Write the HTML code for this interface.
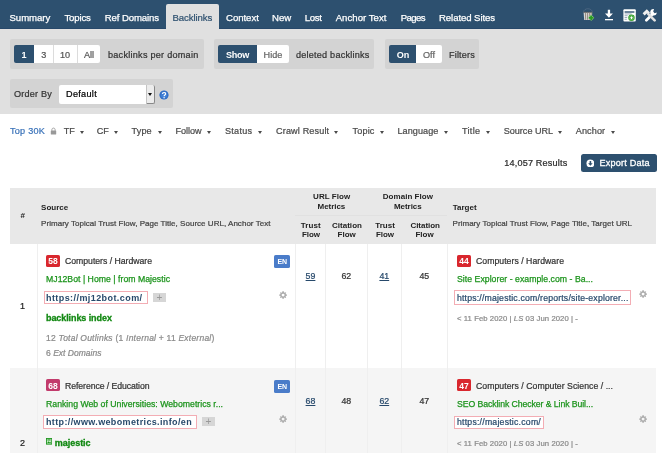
<!DOCTYPE html>
<html>
<head>
<meta charset="utf-8">
<title>Backlinks</title>
<style>
html,body{margin:0;padding:0;}
body{width:662px;height:453px;overflow:hidden;background:#fff;position:relative;font-family:"Liberation Sans",sans-serif;}
.a{position:absolute;}
.t{position:absolute;white-space:nowrap;line-height:14px;height:14px;font-family:"Liberation Sans",sans-serif;}
.t i{font-style:italic;}
.panel{position:absolute;background:#d3d3d3;border-radius:2px;}
.btn{position:absolute;background:#fff;}
.on{background:#2d506f;}
.vline{position:absolute;width:1px;background:#efefef;}
.badge{position:absolute;border-radius:1.6px;}
.ubox{position:absolute;border:1px solid #f3adb4;background:#fff;box-sizing:border-box;}
.plus{position:absolute;background:#d6d6d6;color:#999;font-size:10px;line-height:9px;text-align:center;}
.caret{position:absolute;width:0;height:0;border-left:2.9px solid transparent;border-right:2.9px solid transparent;border-top:3.1px solid #4a4a4a;margin-left:-0.4px;}
</style>
</head>
<body>
<div id="root" style="position:absolute;left:0;top:0;width:662px;height:453px;will-change:transform;">
<!-- top grey area -->
<div class="a" style="left:0;top:0;width:662px;height:114px;background:#e0e0e0;"></div>
<!-- nav -->
<div class="a" style="left:0;top:0;width:662px;height:29px;background:#2d506f;"></div>
<div class="a" style="left:0;top:28px;width:662px;height:1px;background:#27486a;"></div>
<div class="a" style="left:165.5px;top:4.2px;width:53.6px;height:24.8px;background:#e0e0e0;border-radius:2px 2px 0 0;"></div>

<!-- nav icons -->
<svg class="a" style="left:582px;top:7px" width="14" height="15" viewBox="0 0 14 15">
  <path d="M1.4 5.2 C2 0.6 9.8 0.6 10.4 5.2" fill="none" stroke="#5d7289" stroke-width="0.6"/>
  <path d="M1.6 5.2 L10.2 5.2 L9.8 13 L2.2 13 Z" fill="#d8d8d8"/>
  <rect x="1.4" y="4.8" width="9" height="0.8" fill="#4a4a4a"/>
  <path d="M3.4 5.6 L3.7 12.8 M5.4 5.6 L5.5 12.8 M7.4 5.6 L7.3 12.8 M9.2 5.6 L8.9 12.8" stroke="#8d8175" stroke-width="0.9" fill="none"/>
  <path d="M9.2 7.8 L12.2 10.8 L9.2 13.8 L6.2 10.8 Z" fill="#b9e6b0"/>
  <path d="M9.2 8.4 V13.2 M6.8 10.8 H11.6" stroke="#2a9a22" stroke-width="1.9"/>
</svg>
<svg class="a" style="left:604px;top:9px" width="10" height="12" viewBox="0 0 10 12">
  <path d="M3.8 0.7 H6.1 V4.6 H8.9 L4.95 8.7 L1 4.6 H3.8 Z" fill="#fff"/>
  <rect x="1" y="10" width="8" height="1.3" fill="#fff"/>
</svg>
<svg class="a" style="left:622.5px;top:8.5px" width="13" height="13" viewBox="0 0 13 13">
  <rect x="0.4" y="0.3" width="12.4" height="12.2" rx="1" fill="#fff"/>
  <rect x="1.6" y="2.3" width="9.8" height="1.4" fill="#2d506f"/>
  <rect x="1.6" y="4.5" width="7" height="0.9" fill="#8fa0b4"/>
  <rect x="1.6" y="6.3" width="3" height="0.9" fill="#8fa0b4"/>
  <rect x="1.6" y="8" width="2.6" height="0.9" fill="#8fa0b4"/>
  <rect x="1.6" y="9.8" width="2.2" height="0.9" fill="#8fa0b4"/>
  <circle cx="8.5" cy="8.8" r="3.2" fill="#2f9a26"/>
  <circle cx="8.5" cy="8.8" r="2.2" fill="none" stroke="#6fc267" stroke-width="0.8"/>
  <path d="M8.5 7.4 V10.2 M7.1 8.8 H9.9" stroke="#fff" stroke-width="1"/>
</svg>
<svg class="a" style="left:642px;top:8px" width="15" height="14" viewBox="0 0 15 14">
  <!-- wrench -->
  <path d="M4.4 12.2 L10.4 6.2" stroke="#fff" stroke-width="2.7" stroke-linecap="round"/>
  <path d="M12 1 A3.3 3.3 0 1 0 14.8 4.6 L12.6 5.2 L11.2 3.6 Z" fill="#fff"/>
  <!-- hammer -->
  <path d="M12.6 12.4 L6.4 6.2" stroke="#e2e2e2" stroke-width="2.6" stroke-linecap="round"/>
  <path d="M0.6 5.2 L4.8 1.2 L8 4.4 L6.2 6.2 L5.2 5.3 L2.6 7.6 Z" fill="#efefef"/>
</svg>

<!-- filter panels -->
<div class="panel" style="left:9.5px;top:39px;width:194.2px;height:29.6px;"></div>
<div class="btn" style="left:33.8px;top:44.8px;width:66.5px;height:18px;border-radius:0 2px 2px 0;"></div>
<div class="btn on" style="left:13.8px;top:44.8px;width:20.1px;height:18px;border-radius:2px 0 0 2px;"></div>
<div class="a" style="left:53.1px;top:44.8px;width:0.8px;height:18px;background:#dcdcdc;"></div>
<div class="a" style="left:77px;top:44.8px;width:0.8px;height:18px;background:#dcdcdc;"></div>

<div class="panel" style="left:214px;top:39px;width:160px;height:29.5px;"></div>
<div class="btn on" style="left:218px;top:44.8px;width:39px;height:18px;border-radius:2px 0 0 2px;"></div>
<div class="btn" style="left:257px;top:44.8px;width:32px;height:18px;border-radius:0 2px 2px 0;"></div>

<div class="panel" style="left:385px;top:39px;width:94px;height:29.5px;"></div>
<div class="btn on" style="left:389px;top:44.8px;width:27px;height:18px;border-radius:2px 0 0 2px;"></div>
<div class="btn" style="left:416px;top:44.8px;width:25.5px;height:18px;border-radius:0 2px 2px 0;"></div>

<div class="panel" style="left:9.5px;top:78.9px;width:163.6px;height:29.2px;"></div>
<div class="a" style="left:59px;top:85px;width:95.5px;height:18.5px;background:#fff;border-radius:2px;"></div>
<div class="a" style="left:146px;top:85px;width:8.5px;height:18.5px;background:#ececec;border-left:1px solid #c4c4c4;border-right:1px solid #888;border-bottom:1px solid #888;box-sizing:border-box;border-radius:0 2px 2px 0;"></div>
<div class="caret" style="left:147.9px;top:93px;border-top-color:#111;border-left-width:2.3px;border-right-width:2.3px;"></div>
<svg class="a" style="left:158.5px;top:89.5px" width="10" height="10" viewBox="0 0 10 10">
  <circle cx="5" cy="5" r="4.6" fill="#3f7fd6"/>
  <circle cx="5" cy="5" r="3.9" fill="none" stroke="#2a62b4" stroke-width="0.6"/>
  <path d="M3.5 4 C3.5 2 6.6 2 6.6 3.9 C6.6 5 5.1 5 5.1 6.2" fill="none" stroke="#fff" stroke-width="1.2"/>
  <circle cx="5.1" cy="7.7" r="0.7" fill="#fff"/>
</svg>

<!-- filter row: lock + carets -->
<svg class="a" style="left:50px;top:126.5px" width="7" height="8" viewBox="0 0 7 8">
  <path d="M1.9 3.8 V2.6 C1.9 0.6 5.1 0.6 5.1 2.6 V3.8" fill="none" stroke="#999" stroke-width="0.9"/>
  <rect x="0.8" y="3.6" width="5.4" height="3.8" rx="0.5" fill="#999"/>
</svg>
<div class="caret" style="left:80.6px;top:130.5px;"></div>
<div class="caret" style="left:114.2px;top:130.5px;"></div>
<div class="caret" style="left:158px;top:130.5px;"></div>
<div class="caret" style="left:207.2px;top:130.5px;"></div>
<div class="caret" style="left:258px;top:130.5px;"></div>
<div class="caret" style="left:334.8px;top:130.5px;"></div>
<div class="caret" style="left:380.8px;top:130.5px;"></div>
<div class="caret" style="left:444.7px;top:130.5px;"></div>
<div class="caret" style="left:486px;top:130.5px;"></div>
<div class="caret" style="left:558.5px;top:130.5px;"></div>
<div class="caret" style="left:611.8px;top:130.5px;"></div>

<!-- export button -->
<div class="a" style="left:581.2px;top:154.4px;width:75.8px;height:17.2px;background:#2d506f;border-radius:2.5px;"></div>
<svg class="a" style="left:585.6px;top:158.6px" width="8.8" height="8.8" viewBox="0 0 10 10">
  <circle cx="5" cy="5" r="4.5" fill="#fff"/>
  <path d="M4.1 2.2 H5.9 V4.8 H7.6 L5 7.7 L2.4 4.8 H4.1 Z" fill="#2d506f"/>
</svg>

<!-- table header -->
<div class="a" style="left:9.8px;top:188px;width:646.4px;height:55.8px;background:#e8e8e8;"></div>
<div class="a" style="left:295px;top:215.4px;width:152px;height:1px;background:#e1e1e1;"></div>

<!-- row 1 (white) / row 2 (grey) -->
<div class="a" style="left:9.6px;top:367.9px;width:646.6px;height:86px;background:#f5f5f5;"></div>
<div class="vline" style="left:36.8px;top:244px;height:209px;"></div>
<div class="vline" style="left:295.3px;top:244px;height:209px;"></div>
<div class="vline" style="left:325px;top:244px;height:209px;"></div>
<div class="vline" style="left:366.9px;top:244px;height:209px;"></div>
<div class="vline" style="left:400.7px;top:244px;height:209px;"></div>
<div class="vline" style="left:447.1px;top:244px;height:209px;"></div>

<!-- row 1 shapes -->
<div class="badge" style="left:45.7px;top:254.7px;width:14.7px;height:12.2px;background:#d9272e;"></div>
<div class="ubox" style="left:43.5px;top:290.8px;width:104.2px;height:13.1px;"></div>
<div class="plus" style="left:152.6px;top:292.6px;width:13.8px;height:9.4px;">+</div>
<div class="badge" style="left:274.4px;top:255.2px;width:15.5px;height:13.2px;background:#4a7cc9;"></div>
<svg class="a gear" style="left:278.6px;top:290.6px" width="8.2" height="8.2" viewBox="0 0 9 9"><path d="M4.5 0.3 L5.3 0.4 L5.5 1.5 L6.3 1.9 L7.3 1.3 L7.9 1.9 L7.3 2.9 L7.6 3.6 L8.7 3.9 L8.7 5.1 L7.6 5.4 L7.3 6.1 L7.9 7.1 L7.3 7.7 L6.3 7.1 L5.5 7.5 L5.3 8.6 L3.7 8.6 L3.5 7.5 L2.7 7.1 L1.7 7.7 L1.1 7.1 L1.7 6.1 L1.4 5.4 L0.3 5.1 L0.3 3.9 L1.4 3.6 L1.7 2.9 L1.1 1.9 L1.7 1.3 L2.7 1.9 L3.5 1.5 L3.7 0.4 Z M4.5 2.9 A1.6 1.6 0 1 0 4.5 6.1 A1.6 1.6 0 1 0 4.5 2.9 Z" fill="#adadad" fill-rule="evenodd"/></svg>
<div class="badge" style="left:456.8px;top:254.7px;width:14.5px;height:12.2px;background:#d9272e;"></div>
<div class="ubox" style="left:454.4px;top:290.4px;width:176.6px;height:14.3px;"></div>
<svg class="a gear" style="left:639.4px;top:290.3px" width="8.2" height="8.2" viewBox="0 0 9 9"><path d="M4.5 0.3 L5.3 0.4 L5.5 1.5 L6.3 1.9 L7.3 1.3 L7.9 1.9 L7.3 2.9 L7.6 3.6 L8.7 3.9 L8.7 5.1 L7.6 5.4 L7.3 6.1 L7.9 7.1 L7.3 7.7 L6.3 7.1 L5.5 7.5 L5.3 8.6 L3.7 8.6 L3.5 7.5 L2.7 7.1 L1.7 7.7 L1.1 7.1 L1.7 6.1 L1.4 5.4 L0.3 5.1 L0.3 3.9 L1.4 3.6 L1.7 2.9 L1.1 1.9 L1.7 1.3 L2.7 1.9 L3.5 1.5 L3.7 0.4 Z M4.5 2.9 A1.6 1.6 0 1 0 4.5 6.1 A1.6 1.6 0 1 0 4.5 2.9 Z" fill="#adadad" fill-rule="evenodd"/></svg>

<!-- row 2 shapes -->
<div class="badge" style="left:45.7px;top:379px;width:14.7px;height:12.3px;background:#c23b6c;"></div>
<div class="ubox" style="left:43px;top:415.2px;width:153.5px;height:14.2px;"></div>
<div class="plus" style="left:201.5px;top:416.9px;width:13.8px;height:9.6px;">+</div>
<div class="badge" style="left:274.4px;top:380.2px;width:15.5px;height:13.2px;background:#4a7cc9;"></div>
<svg class="a gear" style="left:278.6px;top:414.6px" width="8.2" height="8.2" viewBox="0 0 9 9"><path d="M4.5 0.3 L5.3 0.4 L5.5 1.5 L6.3 1.9 L7.3 1.3 L7.9 1.9 L7.3 2.9 L7.6 3.6 L8.7 3.9 L8.7 5.1 L7.6 5.4 L7.3 6.1 L7.9 7.1 L7.3 7.7 L6.3 7.1 L5.5 7.5 L5.3 8.6 L3.7 8.6 L3.5 7.5 L2.7 7.1 L1.7 7.7 L1.1 7.1 L1.7 6.1 L1.4 5.4 L0.3 5.1 L0.3 3.9 L1.4 3.6 L1.7 2.9 L1.1 1.9 L1.7 1.3 L2.7 1.9 L3.5 1.5 L3.7 0.4 Z M4.5 2.9 A1.6 1.6 0 1 0 4.5 6.1 A1.6 1.6 0 1 0 4.5 2.9 Z" fill="#adadad" fill-rule="evenodd"/></svg>
<div class="badge" style="left:456.8px;top:379.1px;width:14.5px;height:12.2px;background:#d9272e;"></div>
<div class="ubox" style="left:454.4px;top:415.8px;width:89.8px;height:13.6px;"></div>
<svg class="a gear" style="left:639.4px;top:415.3px" width="8.2" height="8.2" viewBox="0 0 9 9"><path d="M4.5 0.3 L5.3 0.4 L5.5 1.5 L6.3 1.9 L7.3 1.3 L7.9 1.9 L7.3 2.9 L7.6 3.6 L8.7 3.9 L8.7 5.1 L7.6 5.4 L7.3 6.1 L7.9 7.1 L7.3 7.7 L6.3 7.1 L5.5 7.5 L5.3 8.6 L3.7 8.6 L3.5 7.5 L2.7 7.1 L1.7 7.7 L1.1 7.1 L1.7 6.1 L1.4 5.4 L0.3 5.1 L0.3 3.9 L1.4 3.6 L1.7 2.9 L1.1 1.9 L1.7 1.3 L2.7 1.9 L3.5 1.5 L3.7 0.4 Z M4.5 2.9 A1.6 1.6 0 1 0 4.5 6.1 A1.6 1.6 0 1 0 4.5 2.9 Z" fill="#adadad" fill-rule="evenodd"/></svg>
<!-- anchor image icon row 2 -->
<svg class="a" style="left:45.5px;top:438.3px" width="6.2" height="6.6" viewBox="0 0 7 7.5">
  <rect x="0.5" y="0.5" width="6" height="6.5" fill="#c9ecc9" stroke="#1c941c" stroke-width="1"/>
  <path d="M1.2 6 L2.8 3.6 L4 5 L4.8 4.2 L5.8 6 Z" fill="#1c941c"/>
  <rect x="1.6" y="1.6" width="3.6" height="1.2" fill="#1c941c"/>
</svg>



<span class="t" id="t0" style="left:9.5px;top:10.5px;font-size:9.6px;font-weight:400;color:#fff;letter-spacing:-0.050px;-webkit-text-stroke:0.25px #fff;">Summary</span>
<span class="t" id="t1" style="left:64.4px;top:10.5px;font-size:9.6px;font-weight:400;color:#fff;letter-spacing:-0.134px;-webkit-text-stroke:0.25px #fff;">Topics</span>
<span class="t" id="t2" style="left:104.8px;top:10.5px;font-size:9.6px;font-weight:400;color:#fff;letter-spacing:-0.114px;-webkit-text-stroke:0.25px #fff;">Ref Domains</span>
<span class="t" id="t3" style="left:226.0px;top:10.5px;font-size:9.6px;font-weight:400;color:#fff;letter-spacing:-0.040px;-webkit-text-stroke:0.25px #fff;">Context</span>
<span class="t" id="t4" style="left:272.0px;top:10.5px;font-size:9.6px;font-weight:400;color:#fff;letter-spacing:0.000px;-webkit-text-stroke:0.25px #fff;">New</span>
<span class="t" id="t5" style="left:304.7px;top:10.5px;font-size:9.6px;font-weight:400;color:#fff;letter-spacing:-0.285px;-webkit-text-stroke:0.25px #fff;">Lost</span>
<span class="t" id="t6" style="left:335.7px;top:10.5px;font-size:9.6px;font-weight:400;color:#fff;letter-spacing:0.029px;-webkit-text-stroke:0.25px #fff;">Anchor Text</span>
<span class="t" id="t7" style="left:400.7px;top:10.5px;font-size:9.6px;font-weight:400;color:#fff;letter-spacing:-0.581px;-webkit-text-stroke:0.25px #fff;">Pages</span>
<span class="t" id="t8" style="left:439.0px;top:10.5px;font-size:9.6px;font-weight:400;color:#fff;letter-spacing:-0.082px;-webkit-text-stroke:0.25px #fff;">Related Sites</span>
<span class="t" id="t9" style="left:172.5px;top:10.5px;font-size:9.6px;font-weight:400;color:#2d506f;letter-spacing:-0.092px;-webkit-text-stroke:0.2px #2d506f;">Backlinks</span>
<span class="t" id="t10" style="left:21.5px;top:47.5px;font-size:9.1px;font-weight:700;color:#fff;letter-spacing:0.000px;">1</span>
<span class="t" id="t11" style="left:41.2px;top:47.5px;font-size:9.1px;font-weight:400;color:#555;letter-spacing:0.000px;-webkit-text-stroke:0.22px #555;">3</span>
<span class="t" id="t12" style="left:59.9px;top:47.5px;font-size:9.1px;font-weight:400;color:#555;letter-spacing:0.000px;-webkit-text-stroke:0.22px #555;">10</span>
<span class="t" id="t13" style="left:83.9px;top:47.5px;font-size:9.1px;font-weight:400;color:#555;letter-spacing:0.000px;-webkit-text-stroke:0.22px #555;">All</span>
<span class="t" id="t14" style="left:108.0px;top:47.5px;font-size:9.1px;font-weight:400;color:#333;letter-spacing:0.253px;-webkit-text-stroke:0.22px #333;">backlinks per domain</span>
<span class="t" id="t15" style="left:226.0px;top:47.5px;font-size:9.1px;font-weight:700;color:#fff;letter-spacing:-0.312px;">Show</span>
<span class="t" id="t16" style="left:263.5px;top:47.5px;font-size:9.1px;font-weight:400;color:#666;letter-spacing:0.074px;-webkit-text-stroke:0.22px #666;">Hide</span>
<span class="t" id="t17" style="left:296.0px;top:47.5px;font-size:9.1px;font-weight:400;color:#333;letter-spacing:0.220px;-webkit-text-stroke:0.22px #333;">deleted backlinks</span>
<span class="t" id="t18" style="left:396.7px;top:47.5px;font-size:9.1px;font-weight:700;color:#fff;letter-spacing:0.000px;">On</span>
<span class="t" id="t19" style="left:423.0px;top:47.5px;font-size:9.1px;font-weight:400;color:#666;letter-spacing:0.000px;-webkit-text-stroke:0.22px #666;">Off</span>
<span class="t" id="t20" style="left:449.0px;top:47.5px;font-size:9.1px;font-weight:400;color:#333;letter-spacing:0.176px;-webkit-text-stroke:0.22px #333;">Filters</span>
<span class="t" id="t21" style="left:14.0px;top:87.0px;font-size:9.1px;font-weight:400;color:#333;letter-spacing:0.201px;-webkit-text-stroke:0.22px #333;">Order By</span>
<span class="t" id="t22" style="left:66.0px;top:87.1px;font-size:9.1px;font-weight:400;color:#000;letter-spacing:0.310px;-webkit-text-stroke:0.22px #000;">Default</span>
<span class="t" id="t23" style="left:10.0px;top:124.3px;font-size:9.1px;font-weight:400;color:#3b73b9;letter-spacing:0.246px;-webkit-text-stroke:0.22px #3b73b9;">Top 30K</span>
<span class="t" id="t24" style="left:63.8px;top:124.3px;font-size:9.1px;font-weight:400;color:#4a4a4a;letter-spacing:0.000px;-webkit-text-stroke:0.22px #4a4a4a;">TF</span>
<span class="t" id="t25" style="left:96.8px;top:124.3px;font-size:9.1px;font-weight:400;color:#4a4a4a;letter-spacing:0.000px;-webkit-text-stroke:0.22px #4a4a4a;">CF</span>
<span class="t" id="t26" style="left:131.6px;top:124.3px;font-size:9.1px;font-weight:400;color:#4a4a4a;letter-spacing:0.095px;-webkit-text-stroke:0.22px #4a4a4a;">Type</span>
<span class="t" id="t27" style="left:175.5px;top:124.3px;font-size:9.1px;font-weight:400;color:#4a4a4a;letter-spacing:-0.064px;-webkit-text-stroke:0.22px #4a4a4a;">Follow</span>
<span class="t" id="t28" style="left:225.0px;top:124.3px;font-size:9.1px;font-weight:400;color:#4a4a4a;letter-spacing:0.253px;-webkit-text-stroke:0.22px #4a4a4a;">Status</span>
<span class="t" id="t29" style="left:276.0px;top:124.3px;font-size:9.1px;font-weight:400;color:#4a4a4a;letter-spacing:0.146px;-webkit-text-stroke:0.22px #4a4a4a;">Crawl Result</span>
<span class="t" id="t30" style="left:352.6px;top:124.3px;font-size:9.1px;font-weight:400;color:#4a4a4a;letter-spacing:0.133px;-webkit-text-stroke:0.22px #4a4a4a;">Topic</span>
<span class="t" id="t31" style="left:397.4px;top:124.3px;font-size:9.1px;font-weight:400;color:#4a4a4a;letter-spacing:0.079px;-webkit-text-stroke:0.22px #4a4a4a;">Language</span>
<span class="t" id="t32" style="left:462.0px;top:124.3px;font-size:9.1px;font-weight:400;color:#4a4a4a;letter-spacing:0.311px;-webkit-text-stroke:0.22px #4a4a4a;">Title</span>
<span class="t" id="t33" style="left:503.8px;top:124.3px;font-size:9.1px;font-weight:400;color:#4a4a4a;letter-spacing:-0.035px;-webkit-text-stroke:0.22px #4a4a4a;">Source URL</span>
<span class="t" id="t34" style="left:575.7px;top:124.3px;font-size:9.1px;font-weight:400;color:#4a4a4a;letter-spacing:0.129px;-webkit-text-stroke:0.22px #4a4a4a;">Anchor</span>
<span class="t" id="t35" style="left:504.2px;top:156.2px;font-size:9.1px;font-weight:400;color:#2c2c2c;letter-spacing:0.188px;-webkit-text-stroke:0.22px #2c2c2c;">14,057 Results</span>
<span class="t" id="t36" style="left:599.5px;top:156.1px;font-size:9.1px;font-weight:400;color:#fff;letter-spacing:0.197px;-webkit-text-stroke:0.3px #fff;">Export Data</span>
<span class="t" id="t37" style="left:20.5px;top:208.9px;font-size:8.0px;font-weight:700;color:#222;letter-spacing:0.000px;">#</span>
<span class="t" id="t38" style="left:41.1px;top:201.1px;font-size:8.0px;font-weight:700;color:#222;letter-spacing:-0.004px;">Source</span>
<span class="t" id="t39" style="left:41.1px;top:216.7px;font-size:8.0px;font-weight:400;color:#444;letter-spacing:0.032px;-webkit-text-stroke:0.22px #444;">Primary Topical Trust Flow, Page Title, Source URL, Anchor Text</span>
<span class="t" id="t40" style="left:313.1px;top:190.4px;font-size:8.0px;font-weight:700;color:#222;letter-spacing:0.044px;">URL Flow</span>
<span class="t" id="t41" style="left:317.6px;top:200.4px;font-size:8.0px;font-weight:700;color:#222;letter-spacing:-0.059px;">Metrics</span>
<span class="t" id="t42" style="left:382.8px;top:190.4px;font-size:8.0px;font-weight:700;color:#222;letter-spacing:0.029px;">Domain Flow</span>
<span class="t" id="t43" style="left:394.0px;top:200.4px;font-size:8.0px;font-weight:700;color:#222;letter-spacing:-0.059px;">Metrics</span>
<span class="t" id="t44" style="left:300.8px;top:218.5px;font-size:8.0px;font-weight:700;color:#222;letter-spacing:0.048px;">Trust</span>
<span class="t" id="t45" style="left:302.0px;top:228.0px;font-size:8.0px;font-weight:700;color:#222;letter-spacing:-0.055px;">Flow</span>
<span class="t" id="t46" style="left:331.9px;top:218.5px;font-size:8.0px;font-weight:700;color:#222;letter-spacing:0.040px;">Citation</span>
<span class="t" id="t47" style="left:337.6px;top:228.0px;font-size:8.0px;font-weight:700;color:#222;letter-spacing:-0.030px;">Flow</span>
<span class="t" id="t48" style="left:375.3px;top:218.5px;font-size:8.0px;font-weight:700;color:#222;letter-spacing:-0.013px;">Trust</span>
<span class="t" id="t49" style="left:376.0px;top:228.0px;font-size:8.0px;font-weight:700;color:#222;letter-spacing:-0.055px;">Flow</span>
<span class="t" id="t50" style="left:410.4px;top:218.5px;font-size:8.0px;font-weight:700;color:#222;letter-spacing:-0.023px;">Citation</span>
<span class="t" id="t51" style="left:415.4px;top:228.0px;font-size:8.0px;font-weight:700;color:#222;letter-spacing:0.020px;">Flow</span>
<span class="t" id="t52" style="left:452.7px;top:201.1px;font-size:8.0px;font-weight:700;color:#222;letter-spacing:0.023px;">Target</span>
<span class="t" id="t53" style="left:452.6px;top:217.4px;font-size:8.0px;font-weight:400;color:#444;letter-spacing:0.028px;-webkit-text-stroke:0.22px #444;">Primary Topical Trust Flow, Page Title, Target URL</span>
<span class="t" id="t54" style="left:20.0px;top:299.2px;font-size:9px;font-weight:400;color:#222;letter-spacing:0.000px;-webkit-text-stroke:0.22px #222;">1</span>
<span class="t" id="t55" style="left:48.3px;top:254.0px;font-size:8.5px;font-weight:700;color:#fff;letter-spacing:0.000px;">58</span>
<span class="t" id="t56" style="left:65.0px;top:254.2px;font-size:8.7px;font-weight:400;color:#333;letter-spacing:-0.020px;-webkit-text-stroke:0.22px #333;">Computers / Hardware</span>
<span class="t" id="t57" style="left:46.0px;top:272.3px;font-size:8.7px;font-weight:400;color:#1c941c;letter-spacing:0.024px;-webkit-text-stroke:0.25px #1c941c;">MJ12Bot | Home | from Majestic</span>
<span class="t" id="t58" style="left:46.0px;top:290.8px;font-size:9px;font-weight:700;color:#27496b;letter-spacing:0.424px;">https://mj12bot.com/</span>
<span class="t" id="t59" style="left:46.0px;top:310.7px;font-size:9px;font-weight:700;color:#128812;letter-spacing:-0.082px;-webkit-text-stroke:0.3px #128812;">backlinks index</span>
<span class="t" id="t60" style="left:46.0px;top:331.4px;font-size:8.5px;font-weight:400;color:#8a8a8a;letter-spacing:0.226px;-webkit-text-stroke:0.22px #8a8a8a;">12 <i>Total Outlinks</i> (1 <i>Internal</i> + 11 <i>External</i>)</span>
<span class="t" id="t61" style="left:46.0px;top:346.1px;font-size:8.5px;font-weight:400;color:#8a8a8a;letter-spacing:0.017px;-webkit-text-stroke:0.22px #8a8a8a;">6 <i>Ext Domains</i></span>
<span class="t" id="t62" style="left:277.4px;top:255.2px;font-size:7px;font-weight:700;color:#fff;letter-spacing:0.000px;">EN</span>
<span class="t" id="t63" style="left:305.6px;top:269.3px;font-size:8.8px;font-weight:400;color:#27496b;letter-spacing:0.000px;text-decoration:underline;-webkit-text-stroke:0.22px #27496b;">59</span>
<span class="t" id="t64" style="left:341.4px;top:269.3px;font-size:8.8px;font-weight:400;color:#333;letter-spacing:0.000px;-webkit-text-stroke:0.22px #333;">62</span>
<span class="t" id="t65" style="left:379.4px;top:269.3px;font-size:8.8px;font-weight:400;color:#27496b;letter-spacing:0.000px;text-decoration:underline;-webkit-text-stroke:0.22px #27496b;">41</span>
<span class="t" id="t66" style="left:419.4px;top:269.3px;font-size:8.8px;font-weight:400;color:#333;letter-spacing:0.000px;-webkit-text-stroke:0.22px #333;">45</span>
<span class="t" id="t67" style="left:459.3px;top:254.0px;font-size:8.5px;font-weight:700;color:#fff;letter-spacing:0.000px;">44</span>
<span class="t" id="t68" style="left:476.0px;top:254.4px;font-size:8.7px;font-weight:400;color:#333;letter-spacing:0.030px;-webkit-text-stroke:0.22px #333;">Computers / Hardware</span>
<span class="t" id="t69" style="left:457.0px;top:272.1px;font-size:8.7px;font-weight:400;color:#1c941c;letter-spacing:0.037px;-webkit-text-stroke:0.25px #1c941c;">Site Explorer - example.com - Ba...</span>
<span class="t" id="t70" style="left:457.0px;top:290.8px;font-size:8.7px;font-weight:400;color:#27496b;letter-spacing:0.185px;-webkit-text-stroke:0.22px #27496b;">https://majestic.com/reports/site-explorer...</span>
<span class="t" id="t71" style="left:457.0px;top:312.2px;font-size:7.7px;font-weight:400;color:#8a8a8a;letter-spacing:0.082px;-webkit-text-stroke:0.22px #8a8a8a;">&lt; 11 Feb 2020 | <i>LS</i> 03 Jun 2020 | -</span>
<span class="t" id="t72" style="left:20.0px;top:436.0px;font-size:9px;font-weight:400;color:#222;letter-spacing:0.000px;-webkit-text-stroke:0.22px #222;">2</span>
<span class="t" id="t73" style="left:48.3px;top:378.5px;font-size:8.5px;font-weight:700;color:#fff;letter-spacing:0.000px;">68</span>
<span class="t" id="t74" style="left:65.0px;top:378.7px;font-size:8.7px;font-weight:400;color:#333;letter-spacing:-0.070px;-webkit-text-stroke:0.22px #333;">Reference / Education</span>
<span class="t" id="t75" style="left:46.0px;top:396.8px;font-size:8.7px;font-weight:400;color:#1c941c;letter-spacing:0.014px;-webkit-text-stroke:0.25px #1c941c;">Ranking Web of Universities: Webometrics r...</span>
<span class="t" id="t76" style="left:46.0px;top:415.3px;font-size:9px;font-weight:700;color:#27496b;letter-spacing:0.361px;">http://www.webometrics.info/en</span>
<span class="t" id="t77" style="left:54.7px;top:435.6px;font-size:9px;font-weight:700;color:#128812;letter-spacing:-0.016px;-webkit-text-stroke:0.3px #128812;">majestic</span>
<span class="t" id="t78" style="left:277.4px;top:379.7px;font-size:7px;font-weight:700;color:#fff;letter-spacing:0.000px;">EN</span>
<span class="t" id="t79" style="left:305.6px;top:393.8px;font-size:8.8px;font-weight:400;color:#27496b;letter-spacing:0.000px;text-decoration:underline;-webkit-text-stroke:0.22px #27496b;">68</span>
<span class="t" id="t80" style="left:341.4px;top:393.8px;font-size:8.8px;font-weight:400;color:#333;letter-spacing:0.000px;-webkit-text-stroke:0.22px #333;">48</span>
<span class="t" id="t81" style="left:379.4px;top:393.8px;font-size:8.8px;font-weight:400;color:#27496b;letter-spacing:0.000px;text-decoration:underline;-webkit-text-stroke:0.22px #27496b;">62</span>
<span class="t" id="t82" style="left:419.4px;top:393.8px;font-size:8.8px;font-weight:400;color:#333;letter-spacing:0.000px;-webkit-text-stroke:0.22px #333;">47</span>
<span class="t" id="t83" style="left:459.3px;top:378.5px;font-size:8.5px;font-weight:700;color:#fff;letter-spacing:0.000px;">47</span>
<span class="t" id="t84" style="left:476.0px;top:378.9px;font-size:8.7px;font-weight:400;color:#333;letter-spacing:0.039px;-webkit-text-stroke:0.22px #333;">Computers / Computer Science / ...</span>
<span class="t" id="t85" style="left:457.0px;top:396.6px;font-size:8.7px;font-weight:400;color:#1c941c;letter-spacing:-0.074px;-webkit-text-stroke:0.25px #1c941c;">SEO Backlink Checker &amp; Link Buil...</span>
<span class="t" id="t86" style="left:457.0px;top:415.3px;font-size:8.7px;font-weight:400;color:#27496b;letter-spacing:0.229px;-webkit-text-stroke:0.22px #27496b;">https://majestic.com/</span>
<span class="t" id="t87" style="left:457.0px;top:436.7px;font-size:7.7px;font-weight:400;color:#8a8a8a;letter-spacing:0.082px;-webkit-text-stroke:0.22px #8a8a8a;">&lt; 11 Feb 2020 | <i>LS</i> 03 Jun 2020 | -</span>
</div>
</body>
</html>
